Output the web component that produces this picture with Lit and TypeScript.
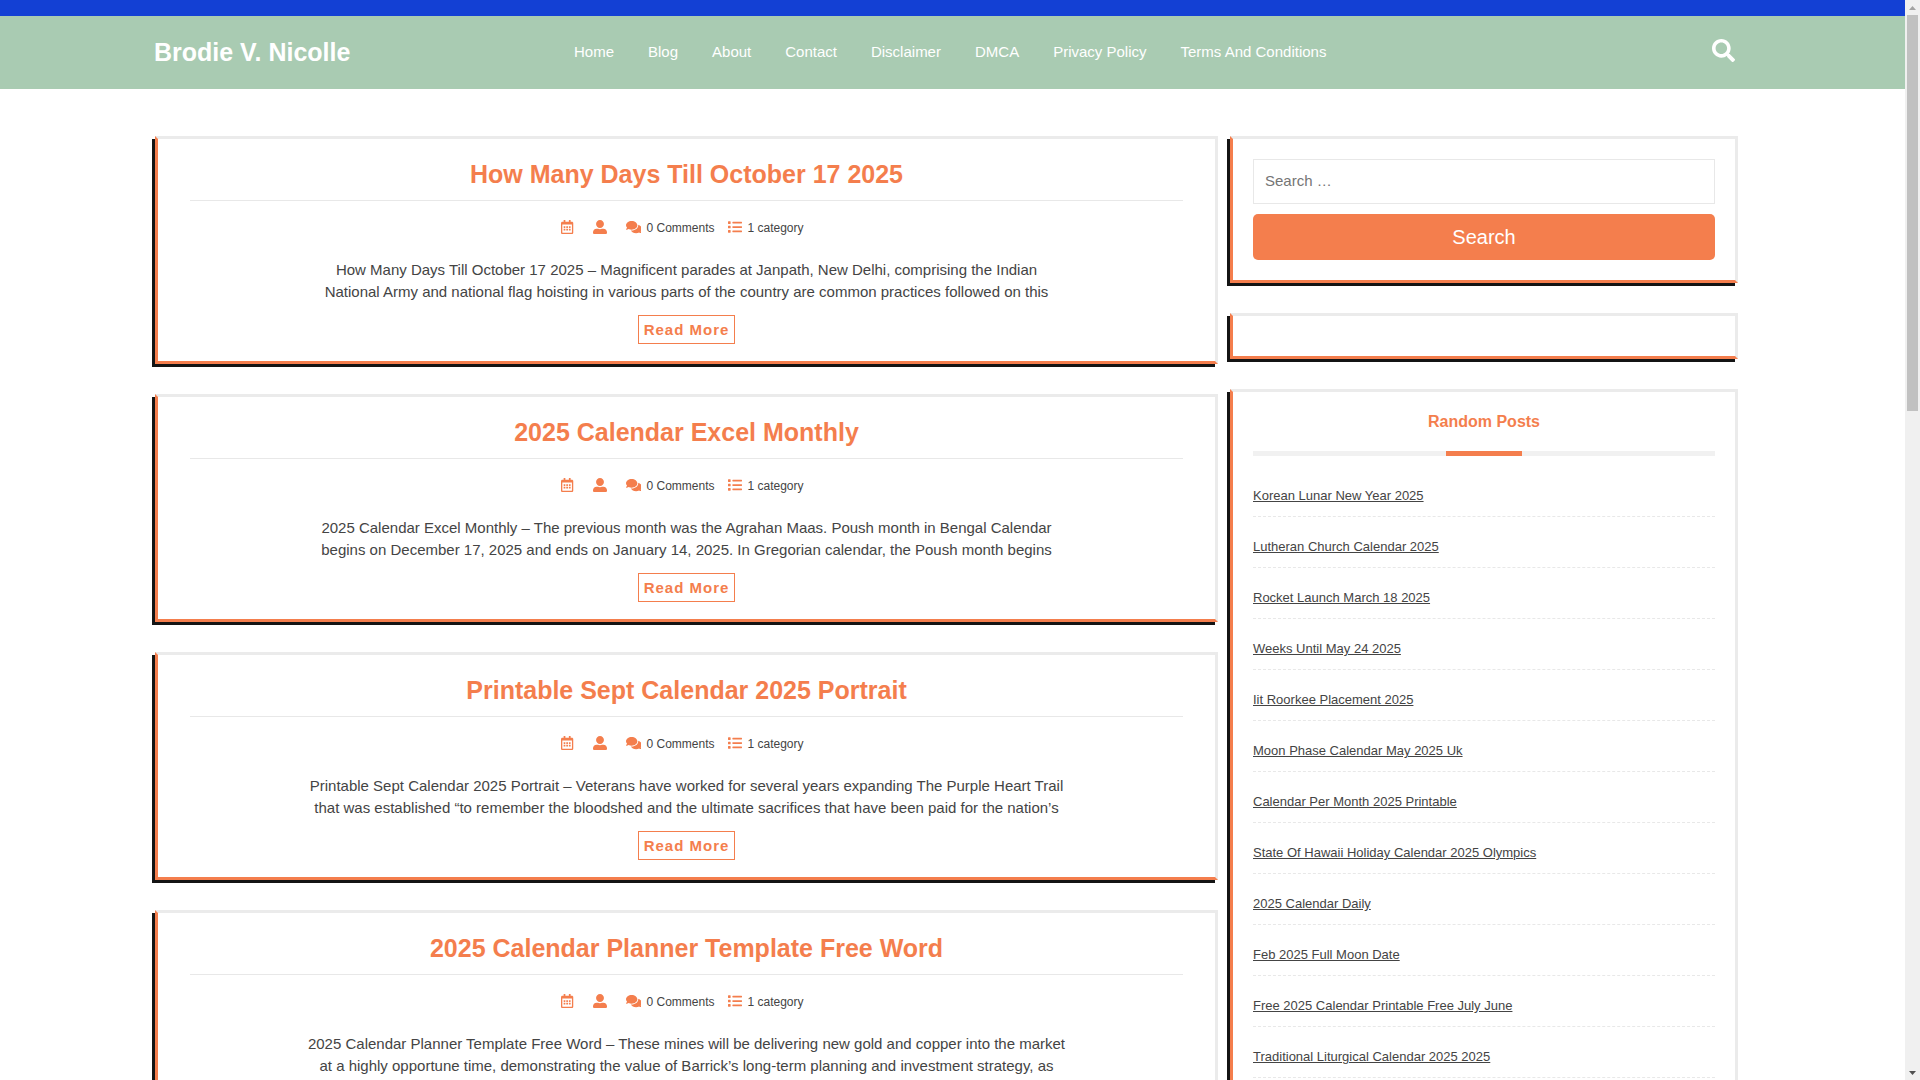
import { LitElement, html, css, svg } from "lit";
import { customElement } from "lit/decorators.js";

const ICONS = {
  search: {
    w: 512,
    d: "M505 442.7L405.3 343c-4.5-4.5-10.6-7-17-7H372c27.6-35.3 44-79.7 44-128C416 93.1 322.9 0 208 0S0 93.1 0 208s93.1 208 208 208c48.3 0 92.7-16.4 128-44v16.3c0 6.4 2.5 12.5 7 17l99.7 99.7c9.4 9.4 24.6 9.4 33.9 0l28.3-28.3c9.4-9.4 9.4-24.6.1-34zM208 336c-70.7 0-128-57.2-128-128 0-70.7 57.2-128 128-128 70.7 0 128 57.2 128 128 0 70.7-57.2 128-128 128z",
  },
  calendar: {
    w: 448,
    d: "M148 288h-40c-6.6 0-12-5.4-12-12v-40c0-6.6 5.4-12 12-12h40c6.6 0 12 5.4 12 12v40c0 6.6-5.4 12-12 12zm108-12v-40c0-6.6-5.4-12-12-12h-40c-6.6 0-12 5.4-12 12v40c0 6.6 5.4 12 12 12h40c6.6 0 12-5.4 12-12zm96 0v-40c0-6.6-5.4-12-12-12h-40c-6.6 0-12 5.4-12 12v40c0 6.6 5.4 12 12 12h40c6.6 0 12-5.4 12-12zm-96 96v-40c0-6.6-5.4-12-12-12h-40c-6.6 0-12 5.4-12 12v40c0 6.6 5.4 12 12 12h40c6.6 0 12-5.4 12-12zm-96 0v-40c0-6.6-5.4-12-12-12h-40c-6.6 0-12 5.4-12 12v40c0 6.6 5.4 12 12 12h40c6.6 0 12-5.4 12-12zm192 0v-40c0-6.6-5.4-12-12-12h-40c-6.6 0-12 5.4-12 12v40c0 6.6 5.4 12 12 12h40c6.6 0 12-5.4 12-12zm96-260v352c0 26.5-21.5 48-48 48H48c-26.5 0-48-21.5-48-48V112c0-26.5 21.5-48 48-48h48V12c0-6.6 5.4-12 12-12h40c6.6 0 12 5.4 12 12v52h128V12c0-6.6 5.4-12 12-12h40c6.6 0 12 5.4 12 12v52h48c26.5 0 48 21.5 48 48zm-48 346V160H48v298c0 3.3 2.7 6 6 6h340c3.3 0 6-2.7 6-6z",
  },
  user: {
    w: 512,
    d: "M256 288c79.5 0 144-64.5 144-144S335.5 0 256 0 112 64.5 112 144s64.5 144 144 144zm128 32h-55.1c-22.2 10.2-46.9 16-72.9 16s-50.6-5.8-72.9-16H128C57.3 320 0 377.3 0 448v16c0 26.5 21.5 48 48 48h416c26.5 0 48-21.5 48-48v-16c0-70.7-57.3-128-128-128z",
  },
  comments: {
    w: 576,
    d: "M416 192c0-88.4-93.1-160-208-160S0 103.6 0 192c0 34.3 14.1 65.9 38 92-13.4 30.2-35.5 54.2-35.8 54.5-2.2 2.3-2.8 5.7-1.5 8.7S4.8 352 8 352c36.6 0 66.9-12.3 88.7-25 32.2 15.7 70.3 25 111.3 25 114.9 0 208-71.6 208-160zm122 220c23.9-26 38-57.7 38-92 0-66.9-53.5-124.2-129.3-148.1.9 6.6 1.3 13.3 1.3 20.1 0 105.9-107.7 192-240 192-10.8 0-21.3-.8-31.7-1.9C207.8 439.6 281.8 480 368 480c41 0 79.1-9.2 111.3-25 21.8 12.7 52.1 25 88.7 25 3.2 0 6.1-1.9 7.3-4.8 1.3-2.9.7-6.3-1.5-8.7-.3-.3-22.4-24.2-35.8-54.5z",
  },
  list: {
    w: 512,
    d: "M80 368H16a16 16 0 0 0-16 16v64a16 16 0 0 0 16 16h64a16 16 0 0 0 16-16v-64a16 16 0 0 0-16-16zm0-320H16A16 16 0 0 0 0 64v64a16 16 0 0 0 16 16h64a16 16 0 0 0 16-16V64a16 16 0 0 0-16-16zm0 160H16a16 16 0 0 0-16 16v64a16 16 0 0 0 16 16h64a16 16 0 0 0 16-16v-64a16 16 0 0 0-16-16zm416 176H176a16 16 0 0 0-16 16v32a16 16 0 0 0 16 16h320a16 16 0 0 0 16-16v-32a16 16 0 0 0-16-16zm0-320H176a16 16 0 0 0-16 16v32a16 16 0 0 0 16 16h320a16 16 0 0 0 16-16V80a16 16 0 0 0-16-16zm0 160H176a16 16 0 0 0-16 16v32a16 16 0 0 0 16 16h320a16 16 0 0 0 16-16v-32a16 16 0 0 0-16-16z",
  },
};

const icon = (name: keyof typeof ICONS, cls: string) => html`
  <svg class=${cls} viewBox="0 0 ${ICONS[name].w} 512" aria-hidden="true">
    ${svg`<path fill="currentColor" d=${ICONS[name].d}></path>`}
  </svg>`;

const NAV = ["Home", "Blog", "About", "Contact", "Disclaimer", "DMCA", "Privacy Policy", "Terms And Conditions"];

const POSTS = [
  {
    title: "How Many Days Till October 17 2025",
    text: "How Many Days Till October 17 2025 – Magnificent parades at Janpath, New Delhi, comprising the Indian National Army and national flag hoisting in various parts of the country are common practices followed on this",
  },
  {
    title: "2025 Calendar Excel Monthly",
    text: "2025 Calendar Excel Monthly – The previous month was the Agrahan Maas. Poush month in Bengal Calendar begins on December 17, 2025 and ends on January 14, 2025. In Gregorian calendar, the Poush month begins",
  },
  {
    title: "Printable Sept Calendar 2025 Portrait",
    text: "Printable Sept Calendar 2025 Portrait – Veterans have worked for several years expanding The Purple Heart Trail that was established “to remember the bloodshed and the ultimate sacrifices that have been paid for the nation’s",
  },
  {
    title: "2025 Calendar Planner Template Free Word",
    text: "2025 Calendar Planner Template Free Word – These mines will be delivering new gold and copper into the market at a highly opportune time, demonstrating the value of Barrick’s long-term planning and investment strategy, as",
  },
];

const RANDOM_POSTS = [
  "Korean Lunar New Year 2025",
  "Lutheran Church Calendar 2025",
  "Rocket Launch March 18 2025",
  "Weeks Until May 24 2025",
  "Iit Roorkee Placement 2025",
  "Moon Phase Calendar May 2025 Uk",
  "Calendar Per Month 2025 Printable",
  "State Of Hawaii Holiday Calendar 2025 Olympics",
  "2025 Calendar Daily",
  "Feb 2025 Full Moon Date",
  "Free 2025 Calendar Printable Free July June",
  "Traditional Liturgical Calendar 2025 2025",
];

@customElement("app-root")
export class AppRoot extends LitElement {
  static styles = css`
    :host {
      display: flex;
      height: 100vh;
      overflow: hidden;
      background: #fff;
      color: #444;
      font-family: "Liberation Sans", Arial, sans-serif;
      font-size: 15px;
      line-height: 22px;
    }
    * {
      box-sizing: border-box;
    }
    h1, h2, h3, p, ul {
      margin: 0;
      padding: 0;
    }
    ul {
      list-style: none;
    }
    a {
      color: inherit;
      text-decoration: none;
    }
    .page {
      flex: 1;
      min-width: 0;
      overflow: hidden;
    }
    .topbar {
      height: 16px;
      background: #1340d4;
    }
    .header {
      display: grid;
      grid-template-columns: 420px 1fr auto;
      align-items: center;
      padding: 16px 170px 17px 154px;
      background: #a9cbb2;
      color: #fff;
    }
    .brand {
      font-size: 25px;
      line-height: 40px;
    }
    .menu {
      display: flex;
      gap: 34px;
    }
    .search-toggle {
      display: flex;
      padding: 0 0 3px;
      border: 0;
      background: none;
      color: #fff;
    }
    .search-icon {
      width: 23px;
      height: 23px;
    }
    .content {
      display: grid;
      grid-template-columns: 1063fr 508fr;
      gap: 12px;
      align-items: start;
      padding: 47px 167px 0 155px;
    }
    .column {
      display: grid;
      gap: 30px;
    }
    .box {
      border: 3px solid #ebebeb;
      border-left-color: #f47e4d;
      border-bottom-color: #f47e4d;
      box-shadow: -3px 3px #141414;
    }
    .post {
      display: flex;
      flex-direction: column;
      align-items: center;
      padding: 15px 32px 17px;
      text-align: center;
    }
    .post-title {
      align-self: stretch;
      padding-bottom: 6px;
      border-bottom: 1px solid #e8e8e8;
      color: #f47e4d;
      font-size: 25px;
      line-height: 40px;
    }
    .meta {
      display: flex;
      align-items: center;
      gap: 14px;
      margin-top: 16px;
      padding-right: 8px;
      font-size: 12px;
    }
    .meta-item {
      display: flex;
      align-items: center;
      gap: 5px;
    }
    .meta-blank {
      padding-right: 5px;
    }
    .meta-icon {
      height: 14px;
      margin-bottom: 2px;
      color: #f47e4d;
    }
    .excerpt {
      max-width: 760px;
      margin-top: 20px;
    }
    .read-more {
      margin-top: 12px;
      padding: 3px 5px 2px;
      border: 1px solid #f47e4d;
      color: #f47e4d;
      font-weight: bold;
      letter-spacing: 1px;
    }
    .widget {
      padding: 20px;
    }
    .search-form {
      display: grid;
      gap: 10px;
    }
    .search-label {
      display: grid;
    }
    .search-input {
      width: 100%;
      height: 45px;
      padding: 0 11px 2px;
      border: 1px solid #e8e8e8;
      background: #fff;
      color: #444;
      font: inherit;
    }
    .search-input::placeholder {
      color: #757575;
    }
    .search-button {
      height: 46px;
      border: 0;
      border-radius: 5px;
      background: #f47e4d;
      color: #fff;
      font-family: inherit;
      font-size: 20px;
    }
    .widget-title {
      color: #f47e4d;
      font-size: 16px;
      line-height: 20px;
      text-align: center;
    }
    .rule {
      display: flex;
      justify-content: center;
      height: 5px;
      margin: 19px 0 10px;
      background: #f1f1f1;
    }
    .rule::before {
      content: "";
      flex: 0 0 calc(100% / 6);
      background: #f47e4d;
    }
    .link-row {
      display: flex;
      align-items: flex-end;
      height: 51px;
      padding-bottom: 10px;
      border-bottom: 1px dashed #e8e8e8;
      font-size: 13px;
      line-height: 20px;
    }
    .link {
      text-decoration: underline;
    }
    .scrollbar {
      display: flex;
      flex-direction: column;
      align-items: center;
      width: 15px;
      background: #f0f0f0;
    }
    .arrow {
      display: flex;
      align-items: center;
      height: 15px;
    }
    .arrow-icon {
      width: 7px;
      height: 4px;
    }
    .thumb {
      flex: 396 1 0;
      width: 11px;
      background: #c1c1c1;
    }
    .track {
      flex: 654 1 0;
    }
  `;

  render() {
    return html`
      <div class="page">
        <div class="topbar"></div>
        <header class="header">
          <h1 class="brand"><a href="#">Brodie V. Nicolle</a></h1>
          <nav class="menu">${NAV.map((n) => html`<a href="#">${n}</a>`)}</nav>
          <button class="search-toggle" aria-label="Open search">${icon("search", "search-icon")}</button>
        </header>
        <div class="content">
          <main class="column">
            ${POSTS.map(
              (p) => html`
                <article class="box post">
                  <h2 class="post-title"><a href="#">${p.title}</a></h2>
                  <div class="meta">
                    <span class="meta-item meta-blank">${icon("calendar", "meta-icon")}</span>
                    <span class="meta-item meta-blank">${icon("user", "meta-icon")}</span>
                    <span class="meta-item">${icon("comments", "meta-icon")}<span>0 Comments</span></span>
                    <span class="meta-item">${icon("list", "meta-icon")}<span>1 category</span></span>
                  </div>
                  <p class="excerpt">${p.text}</p>
                  <a class="read-more" href="#">Read More</a>
                </article>
              `
            )}
          </main>
          <aside class="column">
            <section class="box widget">
              <form class="search-form" @submit=${(e: Event) => e.preventDefault()}>
                <label class="search-label">
                  <input class="search-input" type="search" placeholder="Search …" aria-label="Search for" />
                </label>
                <button class="search-button" type="submit">Search</button>
              </form>
            </section>
            <section class="box widget"></section>
            <section class="box widget">
              <h3 class="widget-title">Random Posts</h3>
              <div class="rule"></div>
              <ul>
                ${RANDOM_POSTS.map((t) => html`<li class="link-row"><a class="link" href="#">${t}</a></li>`)}
              </ul>
            </section>
          </aside>
        </div>
      </div>
      <div class="scrollbar" aria-hidden="true">
        <div class="arrow">
          <svg class="arrow-icon" viewBox="0 0 7 4"><path fill="#a3a3a3" d="M0 4L3.5 0L7 4z"></path></svg>
        </div>
        <div class="thumb"></div>
        <div class="track"></div>
        <div class="arrow">
          <svg class="arrow-icon" viewBox="0 0 7 4"><path fill="#505050" d="M0 0L3.5 4L7 0z"></path></svg>
        </div>
      </div>
    `;
  }
}
